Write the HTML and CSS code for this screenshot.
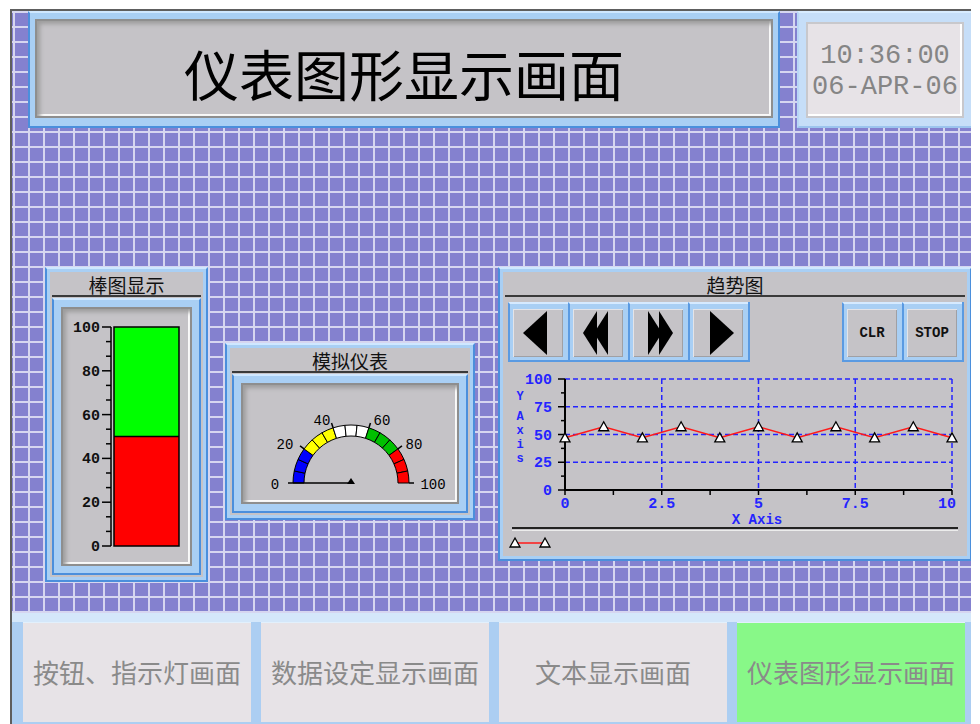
FILE: index.html
```html
<!DOCTYPE html>
<html lang="zh-CN">
<head>
    <meta charset="UTF-8">
    <meta name="viewport" content="width=device-width, initial-scale=1.0">
    <title>仪表图形显示画面</title>
    <link rel="stylesheet" href="styles.css">
</head>
<body>

<div class="screen">

    <div class="top-row">
        <div class="frame title-frame">
            <div class="bevel title-box">仪表图形显示画面</div>
        </div>
        <div class="frame clock-frame">
            <div class="clock-box">
                <div>10:36:00</div>
                <div>06-APR-06</div>
            </div>
        </div>
    </div>

    <div class="middle">
        <!-- 棒图 -->
        <div class="panel bar-panel">
            <div class="panel-inner">
                <div class="panel-title">棒图显示</div>
                <div class="frame panel-frame">
                    <div class="bevel">
                        <svg id="barChart" width="126" height="255"></svg>
                    </div>
                </div>
            </div>
        </div>

        <!-- 模拟仪表 -->
        <div class="panel gauge-panel">
            <div class="panel-inner">
                <div class="panel-title">模拟仪表</div>
                <div class="frame panel-frame">
                    <div class="bevel">
                        <svg id="gauge" width="214" height="117"></svg>
                    </div>
                </div>
            </div>
        </div>

        <!-- 趋势图 -->
        <div class="panel trend-panel">
            <div class="panel-inner">
                <div class="panel-title">趋势图</div>
                <div class="trend-buttons">
                    <div class="btn-group">
                        <div class="tbtn"><div class="tface">
                            <svg width="50" height="46"><polygon points="10,23 34,1 34,45"/></svg>
                        </div></div>
                        <div class="tbtn"><div class="tface">
                            <svg width="50" height="46"><polygon points="10,23 24,1 24,45"/><polygon points="21,23 35,1 35,45"/></svg>
                        </div></div>
                        <div class="tbtn"><div class="tface">
                            <svg width="50" height="46"><polygon points="15,1 15,45 29,23"/><polygon points="26,1 26,45 40,23"/></svg>
                        </div></div>
                        <div class="tbtn"><div class="tface">
                            <svg width="50" height="46"><polygon points="17,1 17,45 41,23"/></svg>
                        </div></div>
                    </div>
                    <div class="btn-group">
                        <div class="tbtn"><div class="tface btn-text">CLR</div></div>
                        <div class="tbtn"><div class="tface btn-text">STOP</div></div>
                    </div>
                </div>
                <svg id="trendChart" width="464" height="193"></svg>
            </div>
        </div>
    </div>

    <div class="nav">
        <div class="nav-btn">按钮、指示灯画面</div>
        <div class="nav-btn">数据设定显示画面</div>
        <div class="nav-btn">文本显示画面</div>
        <div class="nav-btn active">仪表图形显示画面</div>
    </div>

</div>

<script>
    const NS = "http://www.w3.org/2000/svg";

    function add(svg, tag, attrs, text) {
        const el = document.createElementNS(NS, tag);
        for (const k in attrs) el.setAttribute(k, attrs[k]);
        if (text !== undefined) el.textContent = text;
        svg.appendChild(el);
        return el;
    }

    function drawBar() {
        const svg = document.getElementById("barChart");
        const top = 18, bottom = 237, axisX = 48;
        const step = (bottom - top) / 5;

        add(svg, "line", {x1: axisX, y1: top, x2: axisX, y2: bottom, class: "tick"});
        for (let i = 0; i <= 5; i++) {
            const y = bottom - i * step;
            add(svg, "line", {x1: 39, y1: y, x2: axisX, y2: y, class: "tick"});
            add(svg, "text", {x: 37, y: y + 5, "text-anchor": "end", class: "bar-scale"}, i * 20);
            if (i < 5) {
                for (let j = 1; j < 3; j++) {
                    const my = y - j * step / 3;
                    add(svg, "line", {x1: 43, y1: my, x2: axisX, y2: my, class: "tick"});
                }
            }
        }

        const mid = bottom - (bottom - top) * 0.5;
        add(svg, "rect", {x: 51, y: top, width: 65, height: mid - top, fill: "#00ff00"});
        add(svg, "rect", {x: 51, y: mid, width: 65, height: bottom - mid, fill: "#ff0000"});
        add(svg, "line", {x1: 51, y1: mid, x2: 116, y2: mid, stroke: "#000", "stroke-width": 1.5});
        add(svg, "rect", {x: 51, y: top, width: 65, height: bottom - top, fill: "none", stroke: "#000", "stroke-width": 1.5});
    }

    function drawGauge() {
        const svg = document.getElementById("gauge");
        const cx = 108, cy = 98, r1 = 47, r2 = 58;
        const colors = ["#0000ff", "#ffff00", "#ffffff", "#00c000", "#ff0000"];
        const pt = (r, a) => (cx + r * Math.cos(a)).toFixed(2) + "," + (cy - r * Math.sin(a)).toFixed(2);

        for (let i = 0; i < 15; i++) {
            const a0 = Math.PI - i * Math.PI / 15;
            const a1 = Math.PI - (i + 1) * Math.PI / 15;
            const d = "M" + pt(r2, a0) + " A" + r2 + "," + r2 + " 0 0 1 " + pt(r2, a1) +
                " L" + pt(r1, a1) + " A" + r1 + "," + r1 + " 0 0 0 " + pt(r1, a0) + " Z";
            add(svg, "path", {d: d, fill: colors[Math.floor(i / 3)], stroke: "#000", "stroke-width": 1});
        }

        for (let v = 20; v <= 100; v += 20) {
            const a = Math.PI - v / 100 * Math.PI;
            const p1 = pt(r2, a).split(","), p2 = pt(r2 + 5, a).split(",");
            add(svg, "line", {x1: p1[0], y1: p1[1], x2: p2[0], y2: p2[1], class: "tick"});
        }

        const labels = [[32, 104, "0"], [42, 64, "20"], [79, 40, "40"], [139, 40, "60"], [171, 64, "80"], [190, 104, "100"]];
        labels.forEach(l => add(svg, "text", {x: l[0], y: l[1], "text-anchor": "middle", class: "gauge-scale"}, l[2]));

        // 指针指向 0
        add(svg, "line", {x1: cx - 63, y1: cy, x2: cx, y2: cy, stroke: "#000", "stroke-width": 1.5});
        add(svg, "polygon", {points: (cx - 4) + "," + (cy + 1) + " " + (cx + 4) + "," + (cy + 1) + " " + cx + "," + (cy - 5), fill: "#000"});
    }

    function marker(svg, x, y) {
        add(svg, "polygon", {points: (x - 5) + "," + (y + 4) + " " + (x + 5) + "," + (y + 4) + " " + x + "," + (y - 5), class: "marker"});
    }

    function drawTrend() {
        const svg = document.getElementById("trendChart");
        const x0 = 62, x1 = 449, y0 = 17, y1 = 128;
        const px = v => x0 + (x1 - x0) * v / 10;
        const py = v => y1 - (y1 - y0) * v / 100;

        [25, 50, 75, 100].forEach(v => add(svg, "line", {x1: x0, y1: py(v), x2: x1, y2: py(v), class: "grid"}));
        [2.5, 5, 7.5, 10].forEach(v => add(svg, "line", {x1: px(v), y1: y0, x2: px(v), y2: y1, class: "grid"}));

        add(svg, "line", {x1: x0, y1: y0, x2: x0, y2: y1 + 1, class: "axis"});
        add(svg, "line", {x1: x0 - 1, y1: y1, x2: x1, y2: y1, class: "axis"});

        for (let v = 0; v <= 100; v += 12.5) {
            const len = v % 25 === 0 ? 7 : 4;
            add(svg, "line", {x1: x0 - len, y1: py(v), x2: x0, y2: py(v), class: "tick"});
        }
        [0, 25, 50, 75, 100].forEach(v => add(svg, "text", {x: 49, y: py(v) + 5, "text-anchor": "end", class: "chart-label"}, v));

        for (let v = 0; v <= 10; v += 1.25) {
            add(svg, "line", {x1: px(v), y1: y1, x2: px(v), y2: y1 + 5, class: "tick"});
        }
        [[0, "0"], [2.5, "2.5"], [5, "5"], [7.5, "7.5"]].forEach(l => add(svg, "text", {x: px(l[0]), y: 145.5, "text-anchor": "middle", class: "chart-label"}, l[1]));
        add(svg, "text", {x: 444, y: 145.5, "text-anchor": "middle", class: "chart-label"}, "10");
        add(svg, "text", {x: 254, y: 162, "text-anchor": "middle", class: "chart-label axis-title"}, "X Axis");

        // 竖排 Y Axis
        [["Y", 38], ["A", 58], ["x", 72], ["i", 86], ["s", 100]].forEach(l =>
            add(svg, "text", {x: 17, y: l[1], "text-anchor": "middle", class: "chart-label axis-name"}, l[0]));

        const data = [47, 57, 47, 57, 47, 57, 47, 57, 47, 57, 47];
        add(svg, "polyline", {points: data.map((v, i) => px(i) + "," + py(v)).join(" "), class: "trend-line"});
        data.forEach((v, i) => marker(svg, px(i), py(v)));

        add(svg, "line", {x1: 9, y1: 166, x2: 455, y2: 166, stroke: "#222", "stroke-width": 2});
        add(svg, "line", {x1: 9, y1: 168.5, x2: 455, y2: 168.5, stroke: "#ececec", "stroke-width": 1});

        add(svg, "line", {x1: 12, y1: 181, x2: 42, y2: 181, class: "trend-line"});
        marker(svg, 12, 181);
        marker(svg, 42, 181);
    }

    drawBar();
    drawGauge();
    drawTrend();
</script>

</body>
</html>
```

FILE: styles.css
```css
body {
    margin: 0;
    background-color: #fff;
    overflow: hidden;
    font-family: "Noto Sans CJK SC", sans-serif;
}
.screen {
    margin: 9px 0 0 10px;
    width: 959px;
    height: 713px;
    border-left: 2px solid #5e5e5e;
    border-top: 2px solid #5e5e5e;
    overflow: hidden;
    background-color: #8481cf;
    background-image: linear-gradient(90deg, #d6d6f0 2px, transparent 2px), linear-gradient(#d6d6f0 2px, transparent 2px);
    background-size: 15px 15px;
    background-position: 1px 0;
}
.top-row {
    display: flex;
    gap: 17px;
    height: 117px;
    padding-left: 16px;
}
.frame {
    box-sizing: border-box;
    background-color: #a9cff4;
    border: 2px solid;
    border-color: #cfe7ff #4b8fdc #4b8fdc #4b8fdc;
}
.bevel {
    box-sizing: border-box;
    background-color: #c5c3c7;
    border: 2px solid #8e8e8e;
    box-shadow: inset 3px 3px 4px #9c9c9c, inset -2px -2px 0 #fafafa;
}
.bevel svg {
    display: block;
}
.title-frame {
    width: 752px;
    padding: 6px 5px 8px;
    flex-shrink: 0;
}
.title-box {
    height: 100%;
    display: flex;
    align-items: center;
    justify-content: center;
    padding-top: 6px;
    font-size: 55px;
    color: #000;
}
.clock-frame {
    width: 176px;
    padding: 9px 7px 8px;
    flex-shrink: 0;
    background-color: #c6def8;
    border-color: #d8ecff #b8d6f6 #9cc4ee #b8d6f6;
}
.clock-box {
    box-sizing: border-box;
    height: 100%;
    background-color: #e7e3e7;
    border: 2px solid #c8c8cc;
    box-shadow: inset -2px -2px 0 #fff;
    display: flex;
    flex-direction: column;
    justify-content: center;
    align-items: center;
    padding-top: 3px;
    font-family: "Liberation Mono", monospace;
    font-size: 27px;
    line-height: 31px;
    color: #858585;
}
.middle {
    display: flex;
    align-items: flex-start;
    height: 485px;
    padding-left: 33px;
}
.panel {
    box-sizing: border-box;
    flex-shrink: 0;
    display: flex;
    flex-direction: column;
    padding: 3px;
    background-color: #a9cff4;
    border: 2px solid;
    border-color: #cfe7ff #4b8fdc #4b8fdc #4b8fdc;
}
.panel-inner {
    flex: 1;
    display: flex;
    flex-direction: column;
    background-color: #c5c3c7;
}
.panel-title {
    height: 23px;
    margin: 0 2px;
    border-bottom: 2px solid #3a3a3a;
    text-align: center;
    font-size: 19px;
    line-height: 25px;
    color: #111;
}
.panel-frame {
    flex: 1;
    display: flex;
    margin: 1px 2px 2px;
    padding: 7px;
}
.panel-frame .bevel {
    flex: 1;
}
.bar-panel {
    width: 163px;
    height: 315px;
    margin-top: 139px;
}
.gauge-panel {
    width: 250px;
    height: 177px;
    margin-top: 215px;
    margin-left: 17px;
}
.trend-panel {
    width: 474px;
    height: 294px;
    margin-top: 139px;
    margin-left: 23px;
}
.trend-buttons {
    display: flex;
    justify-content: space-between;
    height: 60px;
    margin: 5px 3px 0 5px;
}
.btn-group {
    display: flex;
    background-color: #a9cff4;
    border-right: 2px solid #5a9ae2;
}
.tbtn {
    box-sizing: border-box;
    width: 60px;
    height: 60px;
    display: flex;
    padding: 5px 5px 3px 3px;
    border-left: 2px solid #5a9ae2;
    border-top: 2px solid #d6eaff;
    border-bottom: 2px solid #5a9ae2;
}
.tface {
    flex: 1;
    display: flex;
    align-items: center;
    justify-content: center;
    background-color: #c5c3c7;
    box-shadow: inset 1px 1px 0 #e4e4e8, inset -1px -1px 0 #a0a0a4;
}
.tface polygon {
    fill: #000;
}
.btn-text {
    font-family: "Liberation Mono", monospace;
    font-weight: bold;
    font-size: 14px;
    color: #111;
}
#trendChart {
    display: block;
}
.tick {
    stroke: #000;
    stroke-width: 1.5;
}
.axis {
    stroke: #000;
    stroke-width: 2;
}
.grid {
    stroke: #2424ff;
    stroke-width: 1.5;
    stroke-dasharray: 5 3;
}
.trend-line {
    fill: none;
    stroke: #ff1a1a;
    stroke-width: 1.5;
}
.marker {
    fill: #fff;
    stroke: #000;
    stroke-width: 1.3;
}
.bar-scale {
    font-family: "Liberation Mono", monospace;
    font-weight: bold;
    font-size: 15px;
    fill: #111;
}
.gauge-scale {
    font-family: "Liberation Mono", monospace;
    font-size: 14px;
    fill: #000;
}
.chart-label {
    font-family: "Liberation Mono", monospace;
    font-weight: bold;
    font-size: 15px;
    fill: #2424ff;
}
.chart-label.axis-title {
    font-size: 14px;
}
.chart-label.axis-name {
    font-size: 12px;
}
.nav {
    box-sizing: border-box;
    display: flex;
    gap: 10px;
    height: 112px;
    padding-left: 11px;
    border-top: 9px solid #d4e7fa;
    background-color: #acceF2;
}
.nav-btn {
    box-sizing: border-box;
    width: 228px;
    height: 100px;
    flex-shrink: 0;
    display: flex;
    align-items: center;
    justify-content: center;
    padding-bottom: 3px;
    border-top: 1px solid #e2f0fc;
    background-color: #e7e3e7;
    font-size: 26px;
    color: #8a8a8a;
}
.nav-btn.active {
    background-color: #88f888;
}
```
